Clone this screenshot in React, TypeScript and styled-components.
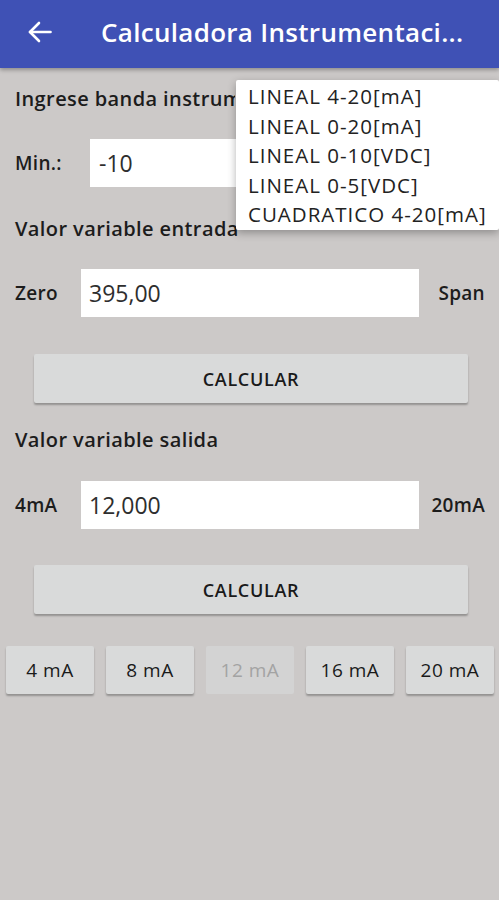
import styled, { createGlobalStyle } from "styled-components"

const GlobalStyle = createGlobalStyle`
  html, body {
    margin: 0;
    padding: 0;
    background: #ccc9c8;
  }
  * {
    box-sizing: border-box;
  }
`

const options = [
  "LINEAL 4-20[mA]",
  "LINEAL 0-20[mA]",
  "LINEAL 0-10[VDC]",
  "LINEAL 0-5[VDC]",
  "CUADRATICO 4-20[mA]",
]

const currents = ["4 mA", "8 mA", "12 mA", "16 mA", "20 mA"]

const BackArrow = () => (
  <svg width="24" height="22" viewBox="0 0 24 22" fill="none" stroke="#fff" strokeWidth="2.6" strokeLinecap="round" strokeLinejoin="round">
    <path d="M22.5 11H2" />
    <path d="M11 2 2 11l9 9" />
  </svg>
)

const App = () => {
  return (
    <Page>
      <GlobalStyle />
      <Toolbar>
        <BackArrow />
        <Title>Calculadora Instrumentaci...</Title>
      </Toolbar>

      <Content>
        {/* the open menu lies over the end of this title */}
        <SectionTitle $top={19} $clip>Ingrese banda instrumento</SectionTitle>
        <MinRow>
          <Label>Min.:</Label>
          <Field $pad={9}>-10</Field>
        </MinRow>

        <SectionTitle $top={30}>Valor variable entrada</SectionTitle>
        <Row $top={28}>
          <Label>Zero</Label>
          <Field>395,00</Field>
          <SideLabel>Span</SideLabel>
        </Row>
        <Calc $top={37}>CALCULAR</Calc>

        <SectionTitle $top={25}>Valor variable salida</SectionTitle>
        <Row $top={29}>
          <Label>4mA</Label>
          <Field>12,000</Field>
          <SideLabel>20mA</SideLabel>
        </Row>
        <Calc $top={36}>CALCULAR</Calc>
      </Content>

      <CurrentBar>
        {currents.map((c) => (
          <CurrentButton key={c} $disabled={c === "12 mA"}>
            {c}
          </CurrentButton>
        ))}
      </CurrentBar>

      <Menu>
        {options.map((o) => (
          <MenuItem key={o}>{o}</MenuItem>
        ))}
      </Menu>
    </Page>
  )
}

export default App

const Page = styled.div`
  position: relative;
  width: 499px;
  height: 900px;
  overflow: hidden;
  background: #ccc9c8;
  font-family: "Open Sans", "Noto Sans", sans-serif;
  color: #1c1c1c;
`

const Toolbar = styled.div`
  height: 68px;
  background: #3f51b5;
  display: flex;
  align-items: center;
  padding: 0 0 4px 28px;
  box-shadow: 0 2px 4px rgba(0, 0, 0, 0.3);
  position: relative;
  z-index: 1;
`

const Title = styled.div`
  margin-left: 49px;
  color: #fff;
  font-size: 26px;
  font-weight: 600;
  letter-spacing: 0.3px;
  white-space: nowrap;
`

const Content = styled.div`
  padding: 0 14px 0 15px;
  display: flex;
  flex-direction: column;
`

const SectionTitle = styled.div<{ $top: number; $clip?: boolean }>`
  margin-top: ${(p) => p.$top}px;
  line-height: 24px;
  font-size: 20px;
  font-weight: 600;
  letter-spacing: 0.4px;
  white-space: nowrap;
  ${(p) => p.$clip && "max-width: 220px; overflow: hidden; padding-bottom: 4px; margin-bottom: -4px;"}
`

const MinRow = styled.div`
  margin-top: 28px;
  height: 48px;
  display: grid;
  grid-template-columns: 75px 1fr;
  align-items: center;
`

const Row = styled.div<{ $top: number }>`
  margin-top: ${(p) => p.$top}px;
  height: 48px;
  display: grid;
  grid-template-columns: 66px 338px 1fr;
  align-items: center;
`

const Label = styled.div`
  font-size: 19px;
  font-weight: 600;
  letter-spacing: 0.3px;
  white-space: nowrap;
`

const SideLabel = styled(Label)`
  text-align: right;
`

const Field = styled.div<{ $pad?: number }>`
  height: 48px;
  background: #fff;
  display: flex;
  align-items: center;
  padding-left: ${(p) => p.$pad ?? 8}px;
  font-size: 23px;
  color: #2e2e2e;
`

const Calc = styled.div<{ $top: number }>`
  margin: ${(p) => p.$top}px 17px 0 19px;
  height: 49px;
  background: #d9dada;
  border-radius: 2px;
  box-shadow: 0 2px 2px rgba(0, 0, 0, 0.28);
  display: flex;
  align-items: center;
  justify-content: center;
  font-size: 18px;
  font-weight: 600;
  letter-spacing: 0.7px;
  color: #1a1a1a;
`

const CurrentBar = styled.div`
  margin-top: 32px;
  padding-left: 6px;
  display: grid;
  grid-template-columns: repeat(5, 88px);
  column-gap: 12px;
`

const CurrentButton = styled.div<{ $disabled?: boolean }>`
  height: 48px;
  background: ${(p) => (p.$disabled ? "#d3d3d3" : "#d9dada")};
  border-radius: 2px;
  box-shadow: ${(p) => (p.$disabled ? "none" : "0 2px 2px rgba(0, 0, 0, 0.28)")};
  display: flex;
  align-items: center;
  justify-content: center;
  font-size: 19px;
  font-weight: 500;
  letter-spacing: 0.5px;
  color: ${(p) => (p.$disabled ? "#a3a3a3" : "#1a1a1a")};
`

const Menu = styled.div`
  position: absolute;
  top: 80px;
  left: 236px;
  width: 263px;
  height: 150px;
  padding-top: 2px;
  background: #fff;
  border-radius: 2px;
  box-shadow: 0 3px 8px rgba(0, 0, 0, 0.3);
  z-index: 2;
`

const MenuItem = styled.div`
  height: 29.5px;
  line-height: 29.5px;
  padding-left: 12px;
  font-size: 20.5px;
  letter-spacing: 1px;
  color: #222;
  white-space: nowrap;
`
